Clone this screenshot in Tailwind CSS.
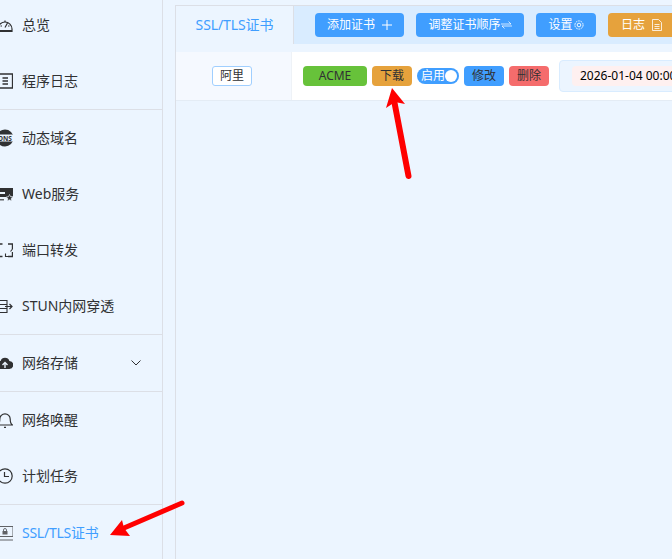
<!DOCTYPE html>
<html lang="zh-CN">
<head>
  <meta charset="UTF-8" />
  <title>SSL/TLS证书</title>
  <script src="https://cdn.jsdelivr.net/npm/@tailwindcss/browser@4"></script>
</head>
<body class="relative w-[672px] h-[559px] overflow-hidden bg-[#ecf5ff] text-[#303133] font-['Noto_Sans','Noto_Sans_CJK_SC',sans-serif] text-sm">
  <div class="flex h-full">

    <!-- Sidebar: the page is scrolled a little, so icons are cut at the left edge -->
    <aside class="w-[163px] h-[562px] shrink-0 -mt-[3px] border-r border-[#dcdfe6]">
      <div class="h-14 flex items-center gap-[9px] -ml-[3px]">
        <svg class="w-4 h-4 shrink-0" viewBox="0 0 16 16" fill="none" stroke="#303133" stroke-width="1.200"><path d="M1 12a7 7 0 1 1 14 0v2.500H1z"/><path d="M1 13h14v2H1z" fill="#303133" stroke="none"/><path d="m8 10.500 2.500-4.500M3.500 9H5M8 3.500V5M11 9h1.500"/></svg>
        <span>总览</span>
      </div>
      <div class="h-14 flex items-center gap-[9px] -ml-[3px]">
        <svg class="w-4 h-4 shrink-0" viewBox="0 0 16 16" fill="none" stroke="#303133" stroke-width="1.300"><path d="M0 1h15.500v14H2"/><path d="M5.500 5h5.500M5.500 8h5.500M5.500 11h5.500"/></svg>
        <span>程序日志</span>
      </div>
      <div class="border-t border-[#dcdfe6] h-[57px] flex items-center gap-[8px] -ml-[4px]">
        <svg class="w-[18px] h-[18px] shrink-0" viewBox="0 0 18 18"><circle cx="9" cy="9" r="8.500" fill="#303133"/><rect x="0" y="5.500" width="18" height="7" fill="#ecf5ff"/><text x="9" y="11.500" text-anchor="middle" font-size="6.500" font-weight="700" fill="#303133">DNS</text></svg>
        <span>动态域名</span>
      </div>
      <div class="h-14 flex items-center gap-[9px] -ml-[3px]">
        <svg class="w-4 h-4 shrink-0" viewBox="0 0 16 16"><path d="M0 2h16v8.500h-4.500L10 11H0z" fill="#303133"/><rect x="0" y="6" width="8" height="2" fill="#ecf5ff"/><path d="M0 13h7v1.500H0z" fill="#606266"/><path d="m12.500 8.500 1 2.200 2.300.3-1.700 1.600.4 2.300-2-1.100-2 1.100.4-2.300-1.700-1.600 2.300-.3z" fill="#303133" stroke="#ecf5ff" stroke-width=".6"/></svg>
        <span>Web服务</span>
      </div>
      <div class="h-14 flex items-center gap-[9px] -ml-[3px]">
        <svg class="w-4 h-4 shrink-0" viewBox="0 0 16 16" fill="none" stroke="#303133" stroke-width="1.400"><path d="M1 6V2h4.500M11 2h4.500v5M15.500 10v4.500H11M1 10v4.500h4.500"/><path d="M13.500 9.500 15.500 7M8.500 11.500v3h3" stroke-width="1.100"/></svg>
        <span>端口转发</span>
      </div>
      <div class="h-14 flex items-center gap-[9px] -ml-[3px]">
        <svg class="w-4 h-4 shrink-0" viewBox="0 0 16 16" fill="none" stroke="#303133" stroke-width="1.100"><path d="M2 2.500h8v12H2zM2 6.500h8M2 10.500h8"/><path d="M8 8.500h7M12.500 6 15 8.500 12.500 11" stroke-width="1.200"/></svg>
        <span>STUN内网穿透</span>
      </div>
      <div class="border-t border-[#dcdfe6] h-[57px] flex items-center gap-[9px] -ml-[3px] pr-[21px]">
        <svg class="w-4 h-4 shrink-0" viewBox="0 0 16 16"><path d="M4 14a4 4 0 0 1-.4-8 4.600 4.600 0 0 1 8.800 0 4 4 0 0 1-.4 8z" fill="#303133"/><path d="M8 13V8M5.500 10 8 7.500l2.500 2.500" stroke="#ecf5ff" stroke-width="1.400" fill="none"/></svg>
        <span>网络存储</span>
        <svg class="ml-auto w-[10px] h-[6px]" viewBox="0 0 10 6" fill="none" stroke="#303133"><path d="m.5.500 4.500 4.500L9.500.500"/></svg>
      </div>
      <div class="border-t border-[#dcdfe6] h-[57px] flex items-center gap-[9px] -ml-[3px]">
        <svg class="w-4 h-4 shrink-0" viewBox="0 0 16 16" fill="none" stroke="#303133" stroke-width="1.200"><path d="M.5 13c1.800-1 2.300-2.500 2.300-6a5.200 5.200 0 0 1 10.400 0c0 3.500.5 5 2.300 6z"/><path d="M7 15.300h2"/></svg>
        <span>网络唤醒</span>
      </div>
      <div class="h-14 flex items-center gap-[9px] -ml-[3px]">
        <svg class="w-4 h-4 shrink-0" viewBox="0 0 16 16" fill="none" stroke="#303133" stroke-width="1.200"><circle cx="8" cy="8" r="7.200"/><path d="M7.500 4v4.500H12"/></svg>
        <span>计划任务</span>
      </div>
      <div class="border-t border-[#dcdfe6] h-[57px] flex items-center gap-[9px] -ml-[3px] text-[#409eff]">
        <svg class="w-4 h-4 shrink-0" viewBox="0 0 16 16" fill="none" stroke="#606266"><path d="M1 1.500h15v10H1zM0 15h16"/><rect x="5.500" y="6" width="5" height="3.500" fill="#606266" stroke="none"/><path d="M6.500 6V5a1.500 1.500 0 0 1 3 0v1" stroke-width=".9"/></svg>
        <span class="tracking-[-0.25px]">SSL/TLS证书</span>
      </div>
    </aside>

    <!-- Main panel -->
    <main class="flex-1 pl-3 pt-[5px] min-w-0">
      <div class="w-[520px] h-full border-l border-t border-[#dcdfe6]">
        <!-- Toolbar -->
        <div class="h-[38px] flex items-center bg-[#d9ecff]">
          <div class="w-[118px] h-full flex items-center justify-center bg-[#ecf5ff] border-r border-[#dcdfe6] text-[#409eff] tracking-[-0.1px] shrink-0">SSL/TLS证书</div>
          <div class="flex gap-3 ml-[21px] shrink-0 text-white text-xs">
            <button class="w-[89px] h-[24px] flex items-center justify-center gap-[7px] rounded bg-[#409eff]">添加证书
              <svg class="w-[10px] h-[10px]" viewBox="0 0 10 10" stroke="#fff"><path d="M5 0v10M0 5h10"/></svg>
            </button>
            <button class="w-[108px] h-[24px] flex items-center justify-center rounded bg-[#409eff]">调整证书顺序
              <svg class="w-[11px] h-[8px]" viewBox="0 0 11 8" fill="none" stroke="#fff" stroke-opacity=".75"><path d="M0 3h10L7.500.5M11 5H1l2.500 2.500"/></svg>
            </button>
            <button class="w-[60px] h-[24px] flex items-center justify-center rounded bg-[#409eff]">设置
              <svg class="w-[10px] h-[10px] ml-[1px]" viewBox="0 0 11 11" fill="none" stroke="#fff"><circle cx="5.500" cy="5.500" r="2"/><circle cx="5.500" cy="5.500" r="4.500" stroke-dasharray="2 .8"/></svg>
            </button>
            <button class="w-[76px] h-[24px] pl-[13px] flex items-center gap-[7px] rounded bg-[#e6a23c]">日志
              <svg class="w-[10px] h-[12px]" viewBox="0 0 10 12" fill="none" stroke="#fff" stroke-opacity=".8"><path d="M.5.500h6l3 3v8h-9zM2.500 5.500h5M2.500 7.500h5M2.500 9.500h5"/></svg>
            </button>
          </div>
        </div>
        <!-- Certificate row -->
        <div class="mt-2 h-[49px] flex bg-white border-b border-[#e4ecf5] text-xs">
          <div class="w-[116px] shrink-0 flex items-center justify-center pr-[3px] bg-[#f5f9ff] border-r border-[#eef2f7]">
            <span class="w-[40px] h-[20px] flex items-center justify-center rounded-[3px] bg-white border border-[#a0cfff]">阿里</span>
          </div>
          <div class="flex items-center pl-[11px] shrink-0">
            <span class="w-[64px] h-[20px] flex items-center justify-center rounded bg-[#67c23a]">ACME</span>
            <span class="ml-[5px] w-[40px] h-[20px] flex items-center justify-center rounded bg-[#e6a23c]">下载</span>
            <span class="ml-[5px] w-[42px] h-[16px] flex items-center justify-between rounded-full bg-[#409eff] text-white pl-[4px] pr-[2px]">启用<i class="w-[12px] h-[12px] rounded-full bg-white"></i></span>
            <span class="ml-[5px] w-[40px] h-[20px] flex items-center justify-center rounded bg-[#409eff]">修改</span>
            <span class="ml-[5px] w-[40px] h-[20px] flex items-center justify-center rounded bg-[#f56c6c]">删除</span>
            <div class="ml-[10px] w-[200px] h-[32px] flex items-center pl-3 rounded bg-[#ecf5ff] border border-[#d9ecff]">
              <span class="h-[20px] px-2 flex items-center rounded whitespace-nowrap bg-[#fef0f0] text-black">2026-01-04 00:00:00</span>
            </div>
          </div>
        </div>
      </div>
    </main>
  </div>

  <!-- Red annotation arrows -->
  <svg class="absolute inset-0 w-[672px] h-[559px] pointer-events-none" viewBox="0 0 672 559">
    <path d="M408.500 176 394 100" stroke="#ff0000" stroke-width="6" stroke-linecap="round" fill="none"/>
    <path d="M392 88 386 108 395 102 405 104z" fill="#ff0000"/>
    <path d="M182 503 124 528" stroke="#ff0000" stroke-width="5" stroke-linecap="round" fill="none"/>
    <path d="M110 535 122 520 124 528 130 536z" fill="#ff0000"/>
  </svg>
</body>
</html>
